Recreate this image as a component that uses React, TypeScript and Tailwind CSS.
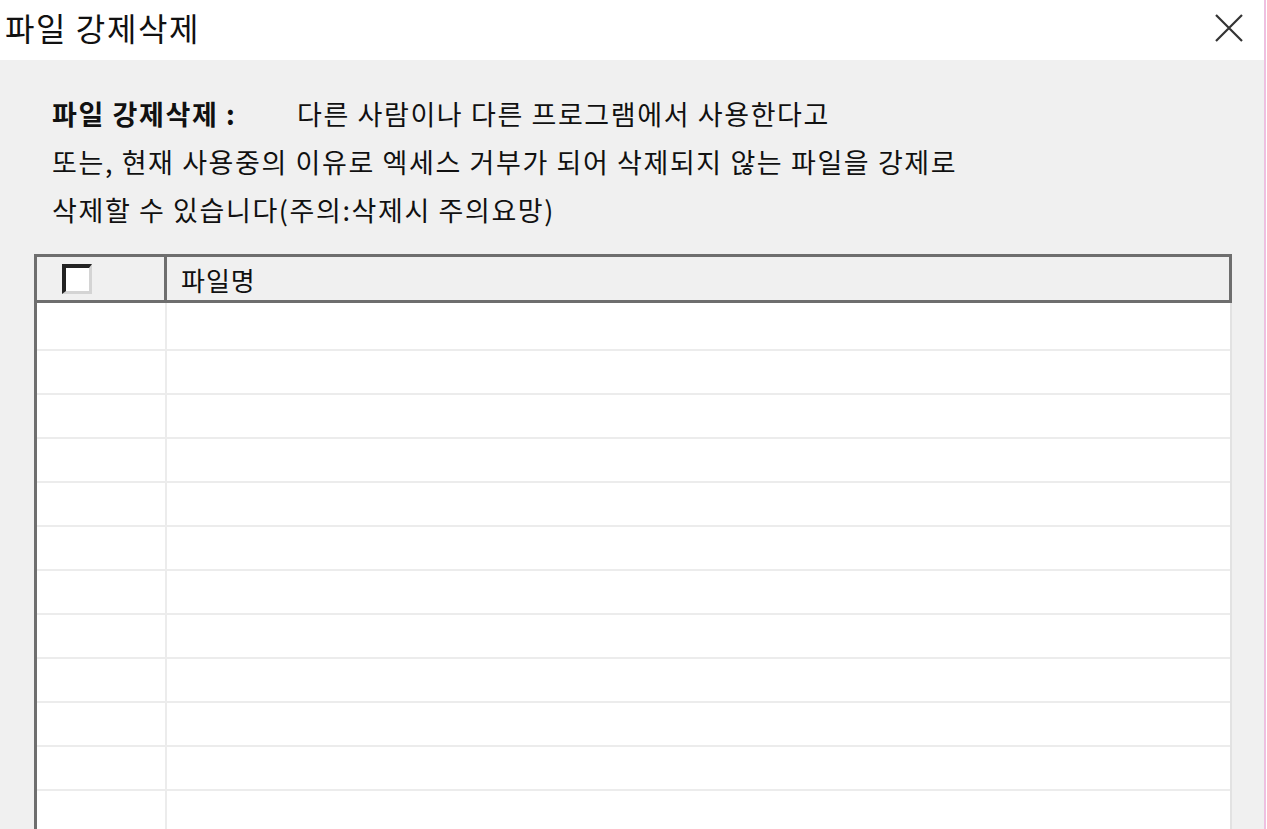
const rows = Array.from({ length: 12 });

export default function App() {
  return (
    <div className="flex h-[829px] w-[1267px] overflow-hidden bg-white font-['Noto_Sans_CJK_KR',sans-serif] text-[#111]">
      <div className="flex min-w-0 flex-1 flex-col">
        {/* title bar */}
        <div className="flex h-[60px] shrink-0 items-center justify-between bg-white pb-[6px] pl-[5px] pr-[21px]">
          <span className="text-[32px] leading-none tracking-[1.6px]">파일 강제삭제</span>
          <svg width="28" height="28" viewBox="0 0 28 28" className="mt-[2px] text-[#333]">
            <path d="M1 1 L27 27 M27 1 L1 27" stroke="currentColor" strokeWidth="2.2" />
          </svg>
        </div>

        <div className="flex-1 bg-[#f0f0f0] pt-[30px]">
          <div className="pl-[52px] text-[27px] leading-[48px] tracking-[1.6px]">
            <p className="whitespace-nowrap">
              <span className="inline-block w-[245px] font-bold">파일 강제삭제 :</span>
              <span>다른 사람이나 다른 프로그램에서 사용한다고</span>
            </p>
            <p className="whitespace-nowrap">또는, 현재 사용중의 이유로 엑세스 거부가 되어 삭제되지 않는 파일을 강제로</p>
            <p className="whitespace-nowrap">삭제할 수 있습니다(주의:삭제시 주의요망)</p>
          </div>

          {/* list */}
          <div className="ml-[34px] mt-[20px] w-[1198px]">
            <div className="flex h-[49px] border-[3px] border-[#6e6e6e] bg-[#f0f0f0]">
              <div className="flex w-[130px] items-center border-r-[3px] border-[#6e6e6e] pl-[25px]">
                <div className="h-[30px] w-[30px] border-[4px] border-b-[3px] border-r-[3px] border-l-[#222] border-t-[#222] border-b-[#d4d4d4] border-r-[#d4d4d4] bg-white" />
              </div>
              <div className="flex items-center pl-[14px] pt-[3px] text-[26px] leading-none tracking-[1px]">파일명</div>
            </div>
            <div className="border-l-[3px] border-r-[2px] border-l-[#6e6e6e] border-r-[#e2e2e2] bg-white">
              {rows.map((_, i) => (
                <div
                  key={i}
                  className={`flex border-b-[2px] border-[#ececec] ${i === 0 ? "h-[48px]" : "h-[44px]"}`}
                >
                  <div className="w-[130px] border-r-[2px] border-[#ececec]" />
                  <div className="flex-1" />
                </div>
              ))}
            </div>
          </div>
        </div>
      </div>
      <div className="w-[2px] shrink-0 bg-[#f0bfe0]" />
      <div className="w-px shrink-0 bg-white" />
    </div>
  );
}
